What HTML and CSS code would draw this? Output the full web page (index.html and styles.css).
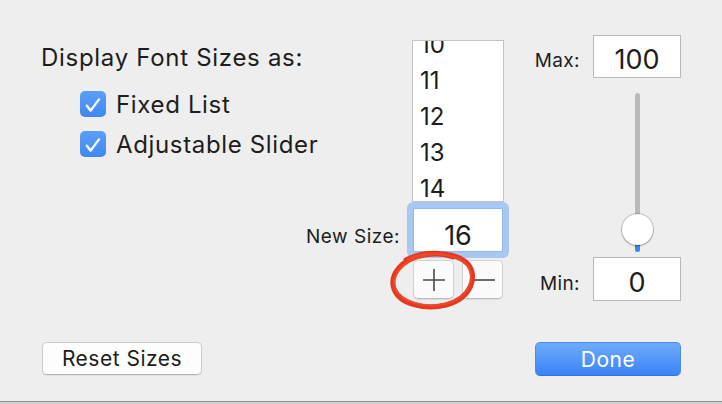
FILE: index.html
```html
<!DOCTYPE html>
<html lang="en">
<head>
  <meta charset="UTF-8" />
  <title>Font Sizes</title>
  <link rel="stylesheet" href="styles.css">
</head>
<body>
  <div class="dialog">
    <div class="main">
      <div class="options">
        <div class="title">Display Font Sizes as:</div>
        <div class="checks">
          <label class="check">
            <span class="box"><svg width="26" height="26" viewBox="0 0 26 26"><path d="M6.8 14.8 L10.6 19.6 L19 8.4" fill="none" stroke="#fff" stroke-width="2.4" stroke-linecap="round" stroke-linejoin="round"/></svg></span>
            Fixed List
          </label>
          <label class="check">
            <span class="box"><svg width="26" height="26" viewBox="0 0 26 26"><path d="M6.8 14.8 L10.6 19.6 L19 8.4" fill="none" stroke="#fff" stroke-width="2.4" stroke-linecap="round" stroke-linejoin="round"/></svg></span>
            Adjustable Slider
          </label>
        </div>
      </div>

      <div class="list">
        <ul class="sizes">
          <li>10</li>
          <li>11</li>
          <li>12</li>
          <li>13</li>
          <li>14</li>
        </ul>
      </div>

      <div class="size-label">New Size:</div>
      <div class="size-field">16</div>

      <div class="steppers">
        <button class="step"><svg width="24" height="24" viewBox="0 0 24 24"><path d="M1 12 H23 M12 1 V23" stroke="#4a4a4a" stroke-width="1.6"/></svg></button>
        <button class="step"><svg width="24" height="24" viewBox="0 0 24 24"><path d="M0 12 H24" stroke="#4a4a4a" stroke-width="1.6"/></svg></button>
        <!-- red marker circle drawn over the + button -->
        <svg class="mark" width="90" height="64" viewBox="0 0 90 64">
          <path d="M18 12 C34 3, 66 2, 80 16 C90 28, 84 50, 58 57 C38 62, 12 57, 6 41 C1 27, 13 11, 36 7 C48 5, 58 6, 65 9" fill="none" stroke="#e5381e" stroke-width="5" stroke-linecap="round"/>
          <path d="M20 11 C36 4, 64 3, 79 17 C88 30, 82 49, 57 56 C38 60, 13 55, 7 40 C3 27, 15 12, 37 8" fill="none" stroke="#ef4a2c" stroke-width="2.4" stroke-linecap="round" opacity="0.8"/>
        </svg>
      </div>

      <div class="range">
        <div class="range-label max-label">Max:</div>
        <div class="num max-num">100</div>
        <div class="slider">
          <div class="track"></div>
          <div class="knob"></div>
        </div>
        <div class="range-label min-label">Min:</div>
        <div class="num min-num">0</div>
      </div>
    </div>

    <div class="footer">
      <button class="btn reset">Reset Sizes</button>
      <button class="btn done">Done</button>
    </div>
  </div>
  <div class="edge"></div>
</body>
</html>
```

FILE: styles.css
```css
body {
  margin: 0;
  width: 722px;
  height: 404px;
  overflow: hidden;
  background: #eeeeee;
  font-family: "Inter", "Liberation Sans", sans-serif;
  color: #1d1d1d;
}

.dialog {
  height: 401px;
  padding-top: 35px;
  box-sizing: border-box;
}

.main {
  display: grid;
  grid-template-columns: 259px 112px 92px 177px;
  grid-template-rows: 167px 52px 47px;
  padding-left: 41px;
}

/* left side */
.options {
  grid-column: 1 / 3;
  grid-row: 1;
}

.title {
  font-size: 24px;
  letter-spacing: 0.7px;
  margin-top: 8px;
}

.checks {
  margin-top: 12px;
  padding-left: 39px;
}

.check {
  display: flex;
  align-items: center;
  gap: 10px;
  height: 40px;
  font-size: 24px;
  letter-spacing: 0.65px;
}

.box {
  width: 26px;
  height: 26px;
  border-radius: 5px;
  background: linear-gradient(#5d9ff6, #3f88f1);
  display: flex;
}

/* font size list */
.list {
  grid-column: 3;
  grid-row: 1;
  margin-top: 5px;
  height: 162px;
  box-sizing: border-box;
  border: 1px solid #c3c3c3;
  background: #fff;
  overflow: hidden;
}

.sizes {
  list-style: none;
  margin: -14px 0 0;
  padding: 0;
}

.sizes li {
  height: 36px;
  line-height: 36px;
  font-size: 24px;
  padding-left: 7px;
}

.size-label {
  grid-column: 2;
  grid-row: 2;
  justify-self: end;
  align-self: end;
  margin: 0 12px 6px 0;
  font-size: 19px;
  letter-spacing: 0.5px;
}

.size-field {
  grid-column: 3;
  grid-row: 2;
  margin: 6px 0 0 1px;
  width: 90px;
  height: 44px;
  box-sizing: border-box;
  padding-top: 10px;
  background: #fff;
  border: 1px solid #93b7ea;
  border-radius: 2px;
  box-shadow: 0 0 0 6px #a9c8f1;
  display: flex;
  align-items: center;
  justify-content: center;
  font-size: 27px;
}

.steppers {
  grid-column: 3;
  grid-row: 3;
  align-self: start;
  position: relative;
  display: flex;
  gap: 8px;
  margin: 6px 0 0 1px;
}

.step {
  width: 41px;
  height: 39px;
  padding: 0;
  background: #fbfbfb;
  border: 1px solid #d2d2d2;
  border-bottom-color: #bdbdbd;
  border-radius: 5px;
  box-shadow: 0 1px 1px rgba(0, 0, 0, 0.08);
  display: flex;
  align-items: center;
  justify-content: center;
}

.mark {
  position: absolute;
  left: -25px;
  top: -12px;
}

/* max / min slider */
.range {
  grid-column: 4;
  grid-row: 1 / 4;
  display: grid;
  grid-template-columns: 76px 88px;
  grid-template-rows: 43px 179px 44px;
  column-gap: 13px;
}

.range-label {
  grid-column: 1;
  justify-self: end;
  align-self: end;
  margin-bottom: 6px;
  font-size: 19px;
  letter-spacing: 0.4px;
}

.max-label, .max-num { grid-row: 1; }
.min-label, .min-num { grid-row: 3; }

.num {
  grid-column: 2;
  box-sizing: border-box;
  padding-top: 6px;
  border: 1px solid #b9b9b9;
  background: #fff;
  display: flex;
  align-items: center;
  justify-content: center;
  font-size: 27px;
}

.slider {
  grid-column: 2;
  grid-row: 2;
  position: relative;
}

.track {
  width: 5px;
  height: 159px;
  margin: 15px auto 0;
  border-radius: 3px;
  background: linear-gradient(#bababa 0, #bababa 136px, #3a84f4 136px);
}

.knob {
  position: absolute;
  left: 28.5px;
  top: 136px;
  width: 31px;
  height: 31px;
  border-radius: 50%;
  background: #fff;
  box-shadow: 0 0 0 1px rgba(0, 0, 0, 0.17), 0 1px 2px rgba(0, 0, 0, 0.25);
}

/* bottom buttons */
.footer {
  display: flex;
  justify-content: space-between;
  align-items: flex-start;
  margin-top: 41px;
  padding: 0 41px 0 42px;
}

.btn {
  font-family: inherit;
  font-size: 21px;
  letter-spacing: 0.5px;
  padding: 0;
  border-radius: 5px;
}

.reset {
  width: 160px;
  height: 33px;
  color: #1d1d1d;
  background: #fdfdfd;
  border: 1px solid #cbcbcb;
  border-bottom-color: #b4b4b4;
  box-shadow: 0 1px 1px rgba(0, 0, 0, 0.06);
}

.done {
  width: 146px;
  height: 34px;
  color: #fff;
  background: linear-gradient(#6eabf9, #3b83f6);
  border: 1px solid #4a8cf0;
  border-bottom-color: #2f73e0;
}

.edge {
  height: 3px;
  box-sizing: border-box;
  border-top: 1px solid #8e8e8e;
  background: #d2d2d2;
}
```
